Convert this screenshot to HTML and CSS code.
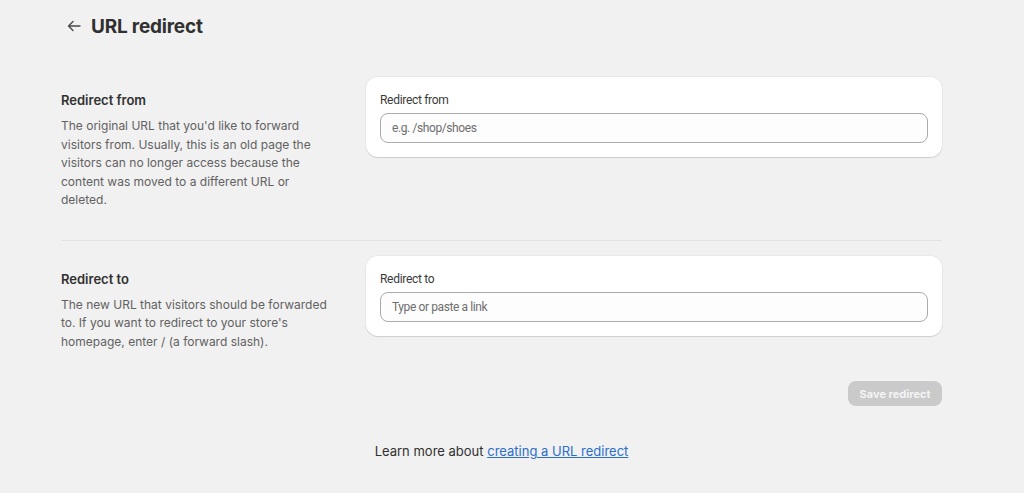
FILE: index.html
```html
<!DOCTYPE html>
<html lang="en">
<head>
  <meta charset="UTF-8" />
  <title>URL redirect</title>
  <link rel="stylesheet" href="styles.css">
</head>
<body>
  <div class="page">
    <header class="page-header">
      <button class="back" aria-label="Back">
        <svg width="16" height="16" viewBox="0 0 16 16" fill="none" stroke="#4a4a4a" stroke-width="1.4" stroke-linecap="round" stroke-linejoin="round">
          <path d="M14 8H2.5M7 3.5 2.5 8 7 12.5" />
        </svg>
      </button>
      <h1 class="title">URL redirect</h1>
    </header>

    <section class="section first">
      <div class="info">
        <h2>Redirect from</h2>
        <p>The original URL that you'd like to forward visitors from. Usually, this is an old page the visitors can no longer access because the content was moved to a different URL or deleted.</p>
      </div>
      <div class="card">
        <label for="from">Redirect from</label>
        <input id="from" type="text" placeholder="e.g. /shop/shoes">
      </div>
    </section>

    <section class="section">
      <div class="info">
        <h2>Redirect to</h2>
        <p>The new URL that visitors should be forwarded to. If you want to redirect to your store's homepage, enter / (a forward slash).</p>
      </div>
      <div class="card">
        <label for="to">Redirect to</label>
        <input id="to" type="text" placeholder="Type or paste a link">
      </div>
    </section>

    <div class="actions">
      <button class="save" disabled>Save redirect</button>
    </div>

    <p class="footer">Learn more about <a href="#">creating a URL redirect</a></p>
  </div>
</body>
</html>
```

FILE: styles.css
```css
body {
  margin: 0;
  font-family: Inter, 'Noto Sans', sans-serif;
  background-color: #f1f1f1;
  color: #303030;
}

.page {
  width: 881px;
  margin-left: 61px;
}

.page-header {
  display: flex;
  align-items: center;
  gap: 4px;
  height: 52px;
}

.back {
  width: 26px;
  height: 26px;
  padding: 0;
  border: none;
  background: none;
  display: flex;
  align-items: center;
  justify-content: center;
}

.title {
  margin: 0;
  font-size: 19px;
  font-weight: 700;
  letter-spacing: -0.2px;
}

.section {
  display: grid;
  grid-template-columns: 289px 576px;
  gap: 16px;
  align-items: start;
}

.section.first {
  margin-top: 25px;
  padding-bottom: 30px;
  border-bottom: 1px solid #e3e3e3;
}

.section + .section {
  margin-top: 15px;
}

.info {
  padding: 13px 13px 0 0;
}

.info h2 {
  margin: 0 0 7px;
  font-size: 13px;
  line-height: 20px;
  font-weight: 600;
}

.info p {
  margin: 0;
  font-size: 12px;
  line-height: 18.5px;
  color: #616161;
}

/* the card text is set in a narrower face */
.card {
  background: #fff;
  border-radius: 12px;
  padding: 14px;
  box-shadow: 0 1px 1px rgba(0, 0, 0, 0.12), 0 0 0 1px rgba(0, 0, 0, 0.03);
  font-family: Roboto, 'Noto Sans', sans-serif;
}

.card label {
  display: block;
  font-size: 12px;
  line-height: 18px;
  letter-spacing: -0.3px;
  margin-bottom: 4px;
  color: #3a3a3a;
}

.card input {
  display: block;
  box-sizing: border-box;
  width: 100%;
  height: 30px;
  padding: 0 11px;
  border: 1px solid #ababab;
  border-radius: 8px;
  background: #fdfdfd;
  font-family: inherit;
  font-size: 12px;
  letter-spacing: -0.4px;
  color: #303030;
}

.card input::placeholder {
  color: #6e6e6e;
}

.actions {
  display: flex;
  justify-content: flex-end;
  padding-top: 30px;
}

.save {
  height: 25px;
  padding: 0 11.5px;
  border: none;
  border-radius: 8px;
  background: #cacaca;
  color: #f4f4f4;
  font-family: inherit;
  font-size: 11px;
  font-weight: 700;
}

.footer {
  margin: 35px 0 0;
  text-align: center;
  font-size: 13px;
  line-height: 20px;
}

.footer a {
  color: #2c6ecb;
}
```
